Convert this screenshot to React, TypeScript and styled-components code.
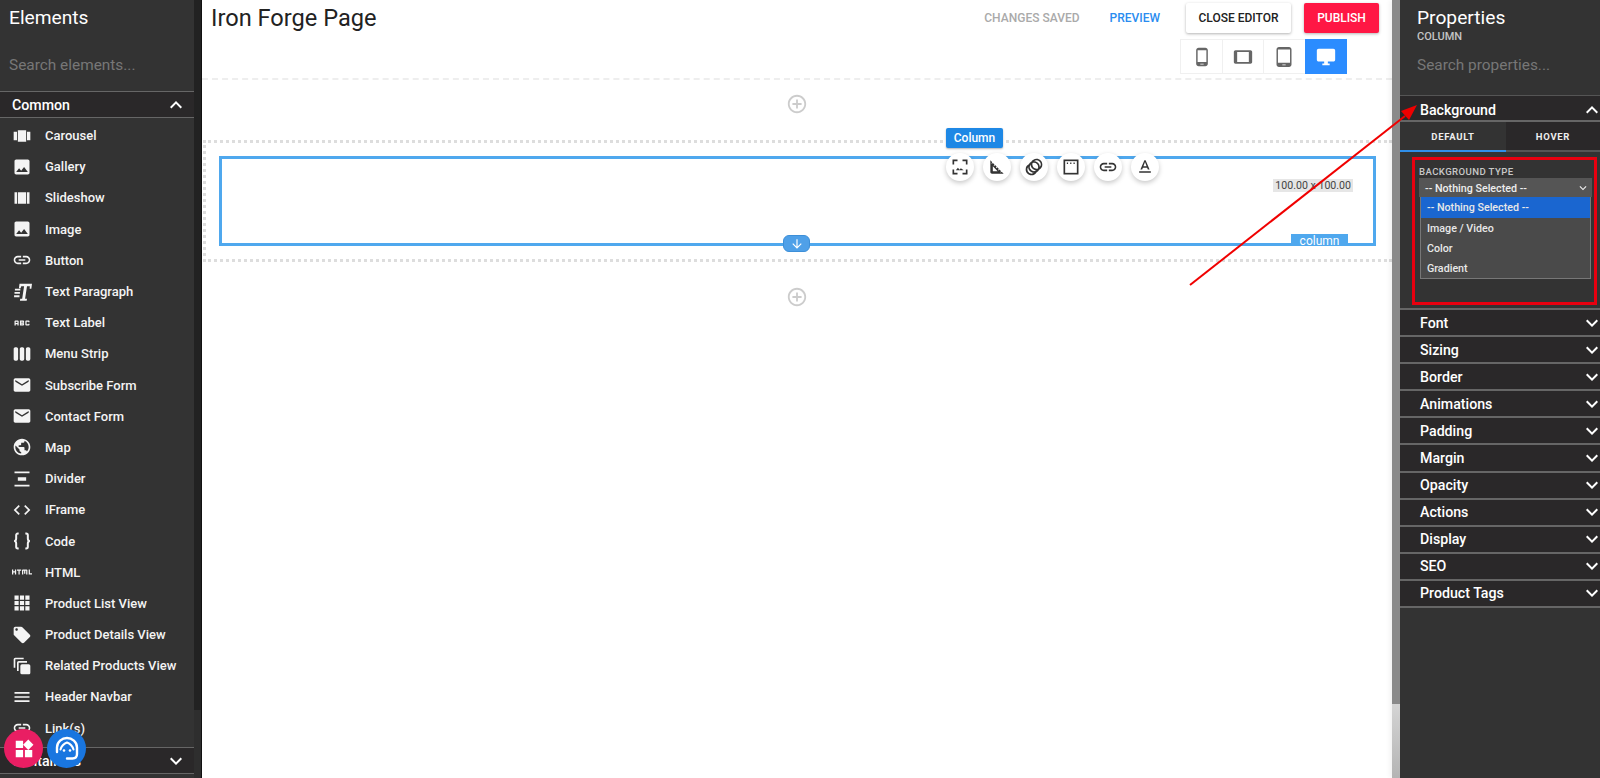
import { ReactElement } from "react";
import styled, { createGlobalStyle } from "styled-components";
import {
  MdAbc,
  MdAddCircleOutline,
  MdAnimation,
  MdArrowDownward,
  MdAutoAwesomeMotion,
  MdCode,
  MdDesktopWindows,
  MdEmail,
  MdExpandLess,
  MdExpandMore,
  MdHtml,
  MdImage,
  MdLink,
  MdLocalOffer,
  MdMenu,
  MdPhoneAndroid,
  MdPublic,
  MdSquareFoot,
  MdTablet,
  MdTabletAndroid,
  MdTextFormat,
  MdViewArray,
  MdViewCarousel,
  MdViewWeek,
  MdWidgets,
} from "react-icons/md";

const GlobalStyle = createGlobalStyle`
  html, body {
    margin: 0;
    height: 100%;
    overflow: hidden;
    background: #fff;
    font-family: Roboto, "Liberation Sans", sans-serif;
  }
  * {
    box-sizing: border-box;
  }
`;

const DividerIcon = () => (
  <svg width="20" height="20" viewBox="0 0 24 24" fill="currentColor">
    <path d="M3 3h18v2H3zM7 10h10v4H7zM3 19h18v2H3z" />
  </svg>
);

const ParagraphIcon = () => (
  <svg width="20" height="20" viewBox="0 0 24 24" fill="currentColor">
    <path d="M9 2h15l-.8 6h-2l.2-3h-3.400l-2.300 15h2.300l-.4 2.500H9.500l.4-2.500h2.300l2.300-15h-3.400l-.8 2.500H8.300zM3.500 8h6.500v2.200H3.500zM3 12h6.500v2.200H3zM2.500 16h6.500v2.200H2.500z" />
  </svg>
);

const BracesIcon = () => (
  <svg width="20" height="20" viewBox="0 0 24 24" fill="none" stroke="currentColor" strokeWidth="2.400">
    <path d="M8 3H7C5.500 3 5 4 5 5v4c0 1.500-.8 3-2.500 3C4.200 12 5 13.500 5 15v4c0 1 .5 2 2 2h1M16 3h1c1.500 0 2 1 2 2v4c0 1.500.8 3 2.500 3-1.700 0-2.500 1.500-2.500 3v4c0 1-.5 2-2 2h-1" />
  </svg>
);

const GridIcon = () => (
  <svg width="20" height="20" viewBox="0 0 24 24" fill="currentColor">
    <path d="M3 3h5v5H3zM9.500 3h5v5h-5zM16 3h5v5h-5zM3 9.500h5v5H3zM9.500 9.500h5v5h-5zM16 9.500h5v5h-5zM3 16h5v5H3zM9.500 16h5v5h-5zM16 16h5v5h-5z" />
  </svg>
);

const WindowIcon = () => (
  <svg width="20" height="20" viewBox="0 0 24 24" fill="none" stroke="currentColor" strokeWidth="2">
    <rect x="4" y="4" width="16" height="16" />
    <path d="M7 7.500h1.500M11 7.500h1.500M15 7.500h1.500" />
  </svg>
);

const FrameImageIcon = () => (
  <svg width="20" height="20" viewBox="0 0 24 24" fill="none" stroke="currentColor" strokeWidth="2">
    <path d="M9 4H4v5M15 4h5v5M4 15v5h5M20 15v5h-5" />
    <path d="M7 16l2.500-3 2 2.200 1.500-1.700 3.500 2.500z" fill="currentColor" stroke="none" />
  </svg>
);

const HeadsetIcon = () => (
  <svg width="30" height="30" viewBox="0 0 30 30" fill="none" stroke="currentColor" strokeWidth="2.400">
    <path d="M5 18v-4.500C5 8 10 4 15 4s10 4 10 9.500V20c0 3-2 4.500-4.500 4.500H15" strokeLinecap="round" />
    <path d="M8.500 15.500C9.500 12 12.500 9.500 15 8.500c2.500 1 5.500 3.500 6.500 7" strokeWidth="2" strokeLinecap="round" />
    <circle cx="12" cy="16.500" r="1.300" fill="currentColor" stroke="none" />
    <circle cx="18" cy="16.500" r="1.300" fill="currentColor" stroke="none" />
  </svg>
);

type Element = { label: string; icon: ReactElement };

const elements: Element[] = [
  { label: "Carousel", icon: <MdViewCarousel /> },
  { label: "Gallery", icon: <MdImage /> },
  { label: "Slideshow", icon: <MdViewArray /> },
  { label: "Image", icon: <MdImage /> },
  { label: "Button", icon: <MdLink /> },
  { label: "Text Paragraph", icon: <ParagraphIcon /> },
  { label: "Text Label", icon: <MdAbc /> },
  { label: "Menu Strip", icon: <MdViewWeek /> },
  { label: "Subscribe Form", icon: <MdEmail /> },
  { label: "Contact Form", icon: <MdEmail /> },
  { label: "Map", icon: <MdPublic /> },
  { label: "Divider", icon: <DividerIcon /> },
  { label: "IFrame", icon: <MdCode /> },
  { label: "Code", icon: <BracesIcon /> },
  { label: "HTML", icon: <MdHtml /> },
  { label: "Product List View", icon: <GridIcon /> },
  { label: "Product Details View", icon: <MdLocalOffer /> },
  { label: "Related Products View", icon: <MdAutoAwesomeMotion /> },
  { label: "Header Navbar", icon: <MdMenu /> },
  { label: "Link(s)", icon: <MdLink /> },
];

const properties = [
  "Font",
  "Sizing",
  "Border",
  "Animations",
  "Padding",
  "Margin",
  "Opacity",
  "Actions",
  "Display",
  "SEO",
  "Product Tags",
];

const Page = styled.div`
  position: relative;
  display: flex;
  width: 100%;
  height: 100vh;
  overflow: hidden;
`;

const Sidebar = styled.aside`
  display: flex;
  flex: none;
  width: 202px;
  height: 100%;
  background: #333;
  color: #fff;
  border-right: 1px solid #111;
`;

const SidebarBody = styled.div`
  width: 194px;
  height: 100%;
  overflow: hidden;
`;

const SidebarRail = styled.div`
  flex: 1;
  background: linear-gradient(to bottom, #222 0, #222 710px, #2e2e2e 710px);
`;

const PanelTitle = styled.h2`
  margin: 0;
  font-size: 19.200px;
  font-weight: 400;
  line-height: 24px;
`;

const SidebarHead = styled.div`
  height: 91px;
  padding: 6px 9px 0;
`;

const Placeholder = styled.div`
  margin-top: 24px;
  font-size: 15.400px;
  line-height: 22px;
  color: #777;
`;

const GroupRow = styled.div`
  display: flex;
  align-items: center;
  justify-content: space-between;
  height: 27px;
  padding: 1px 6px 0 12px;
  background: #2a2829;
  border-top: 1px solid #666;
  border-bottom: 1px solid #666;
  font-size: 14.200px;
  font-weight: 500;
  svg {
    font-size: 24px;
  }
`;

const ElementList = styled.ul`
  margin: 0;
  padding: 2px 0 3px;
  list-style: none;
`;

const ElementItem = styled.li`
  display: flex;
  align-items: center;
  gap: 13px;
  height: 31.200px;
  padding-left: 12px;
  font-size: 13px;
  font-weight: 500;
  color: #f4f4f4;
  svg {
    flex: none;
    font-size: 20px;
  }
`;

const Main = styled.main`
  flex: 1;
  min-width: 0;
  height: 100%;
`;

const TopBar = styled.header`
  display: flex;
  justify-content: space-between;
  height: 80px;
  padding: 3px 13px 0 9px;
  border-bottom: 2px dashed #eee;
`;

const PageTitle = styled.h1`
  margin: 0;
  font-size: 23.600px;
  font-weight: 400;
  line-height: 30px;
  color: #222;
`;

const TopActions = styled.div`
  display: flex;
  flex-direction: column;
  align-items: flex-end;
  gap: 6px;
`;

const ActionRow = styled.div`
  display: flex;
  align-items: center;
`;

const StatusText = styled.span<{ $color: string; $gap: number }>`
  margin-right: ${(p) => p.$gap}px;
  font-size: 12px;
  font-weight: 500;
  color: ${(p) => p.$color};
`;

const HeadButton = styled.button<{ $primary?: boolean }>`
  height: 30px;
  padding: 0;
  width: ${(p) => (p.$primary ? 75 : 105)}px;
  margin-right: ${(p) => (p.$primary ? 0 : 13)}px;
  border: 0;
  border-radius: 2px;
  background: ${(p) => (p.$primary ? "#ff1744" : "#fff")};
  color: ${(p) => (p.$primary ? "#fff" : "#222")};
  font: 500 12px Roboto, sans-serif;
  box-shadow: 0 1px 3px rgba(0, 0, 0, 0.3);
`;

const DeviceGroup = styled.div`
  display: flex;
  margin-right: 32px;
`;

const DeviceButton = styled.div<{ $active?: boolean }>`
  display: flex;
  align-items: center;
  justify-content: center;
  width: 42.400px;
  height: 35px;
  border: 1px solid ${(p) => (p.$active ? "#2b8cff" : "#f0f0f0")};
  margin-left: -1px;
  background: ${(p) => (p.$active ? "#2b8cff" : "#fff")};
  color: ${(p) => (p.$active ? "#fff" : "#666")};
  font-size: ${(p) => (p.$active ? 22 : 20)}px;
`;

const AddRow = styled.div<{ $top: number; $height: number }>`
  display: flex;
  align-items: flex-start;
  justify-content: center;
  height: ${(p) => p.$height}px;
  padding-top: ${(p) => p.$top}px;
  color: #ccc;
  font-size: 22px;
`;

const Section = styled.section`
  height: 122px;
  padding: 13px 16px 13px 13px;
  border-top: 3px dotted #ddd;
  border-bottom: 3px dotted #ddd;
  border-left: 3px dotted #ddd;
  margin-left: 1px;
`;

const ColumnBox = styled.div`
  position: relative;
  height: 90px;
  border: 3px solid #4fa8ee;
`;

const ColumnLabel = styled.div`
  position: absolute;
  top: -31px;
  left: 724px;
  width: 57px;
  height: 20px;
  border-radius: 2px;
  background: #1e88e5;
  color: #fff;
  font-size: 12px;
  font-weight: 500;
  line-height: 20px;
  text-align: center;
  box-shadow: 0 1px 2px rgba(0, 0, 0, 0.3);
`;

const ToolRow = styled.div`
  position: absolute;
  top: -6px;
  left: 724px;
  display: flex;
  gap: 9px;
`;

const ToolButton = styled.div`
  display: flex;
  align-items: center;
  justify-content: center;
  width: 28px;
  height: 28px;
  border-radius: 50%;
  background: #fff;
  color: #333;
  font-size: 20px;
  box-shadow: 0 2px 5px rgba(0, 0, 0, 0.22);
`;

const SizeBadge = styled.div`
  position: absolute;
  top: 20px;
  right: 20px;
  padding: 0 2px;
  background: #e6e6e6;
  color: #444;
  font-size: 10.600px;
  line-height: 13px;
  white-space: nowrap;
`;

const ColumnTag = styled.div`
  position: absolute;
  right: 25px;
  bottom: -3px;
  width: 57px;
  height: 12px;
  background: #4fa8ee;
  color: #fff;
  font-size: 12px;
  line-height: 14px;
  text-align: center;
`;

const DownHandle = styled.div`
  position: absolute;
  left: 561px;
  bottom: -9px;
  display: flex;
  align-items: center;
  justify-content: center;
  width: 27px;
  height: 17px;
  border: 1px solid #3d8fd8;
  border-radius: 6px;
  background: #4fa0e8;
  color: #fff;
  font-size: 14px;
`;

const PageRail = styled.div`
  flex: none;
  width: 8px;
  height: 100%;
  background: linear-gradient(to bottom, #8a8a8a 0, #8a8a8a 704px, #d4d4d4 704px, #b4b4b4 778px);
  box-shadow: -2px 0 5px rgba(0, 0, 0, 0.06);
`;

const Properties = styled.aside`
  flex: none;
  width: 200px;
  height: 100%;
  overflow: hidden;
  background: #333;
  color: #fff;
`;

const PropertiesHead = styled.div`
  height: 95px;
  padding: 6px 17px 0;
`;

const Subtitle = styled.div`
  margin-top: 1px;
  font-size: 11px;
  font-weight: 500;
  line-height: 12px;
  color: #c4c4c4;
`;

const PropertiesSearch = styled(Placeholder)`
  margin-top: 11px;
`;

const PropRow = styled.div`
  display: flex;
  align-items: center;
  justify-content: space-between;
  height: 27.100px;
  padding: 0 0 0 20px;
  background: #2a2829;
  border-bottom: 2px solid #666;
  font-size: 14.200px;
  font-weight: 500;
  svg {
    flex: none;
    font-size: 24px;
    margin-right: -4px;
  }
`;

const FirstRow = styled(PropRow)`
  height: 27px;
  padding-top: 4px;
  border-top: 1px solid #555;
`;

const Tabs = styled.div`
  display: grid;
  grid-template-columns: 106px 94px;
  height: 29px;
  background: #2a2829;
`;

const Tab = styled.div<{ $active?: boolean }>`
  padding-top: 2px;
  border-bottom: 2px solid ${(p) => (p.$active ? "#2f8fea" : "#555")};
  background: ${(p) => (p.$active ? "#333" : "#2a2829")};
  font-size: 9.500px;
  font-weight: 700;
  letter-spacing: 0.700px;
  line-height: 26px;
  text-align: center;
  color: #eee;
`;

const BoxWrap = styled.div`
  padding: 6px 3px 3px 12px;
  border-bottom: 2px solid #666;
`;

const RedBox = styled.div`
  height: 148px;
  padding: 6px 2px 0 4px;
  border: 3px solid #e8000f;
`;

const FieldLabel = styled.div`
  font-size: 9.600px;
  font-weight: 500;
  letter-spacing: 0.400px;
  line-height: 12px;
  color: #c8c8c8;
`;

const SelectBox = styled.div`
  display: flex;
  align-items: center;
  justify-content: space-between;
  height: 19px;
  padding: 1px 2px 0 6px;
  background: #555;
  font-size: 10.700px;
  font-weight: 500;
  color: #eee;
  svg {
    font-size: 14px;
  }
`;

const OptionList = styled.div`
  margin: 0 1px;
  height: 82px;
  background: #4a4a4a;
  border: 1px solid #777;
  border-top: 0;
`;

const Option = styled.div<{ $selected?: boolean }>`
  height: ${(p) => (p.$selected ? 21 : 20)}px;
  padding-left: 6px;
  background: ${(p) => (p.$selected ? "#1a66d0" : "transparent")};
  font-size: 10.700px;
  font-weight: 500;
  line-height: 22px;
  color: #e8e8e8;
`;

const Floating = styled.div`
  position: absolute;
  left: 4px;
  top: 729px;
  display: flex;
  gap: 4px;
`;

const RoundBadge = styled.div<{ $color: string }>`
  display: flex;
  align-items: center;
  justify-content: center;
  width: 39px;
  height: 39px;
  border-radius: 50%;
  background: ${(p) => p.$color};
  color: #fff;
  font-size: 22px;
`;

const ArrowOverlay = styled.svg`
  position: absolute;
  top: 0;
  left: 0;
  width: 100%;
  height: 100%;
  pointer-events: none;
`;

const tools = [
  <FrameImageIcon key="size" />,
  <MdSquareFoot key="foot" />,
  <MdAnimation key="anim" />,
  <WindowIcon key="window" />,
  <MdLink key="link" />,
  <MdTextFormat key="text" />,
];

export default function App() {
  return (
    <Page>
      <GlobalStyle />
      <Sidebar>
        <SidebarBody>
          <SidebarHead>
            <PanelTitle>Elements</PanelTitle>
            <Placeholder>Search elements...</Placeholder>
          </SidebarHead>
          <GroupRow>
            Common
            <MdExpandLess />
          </GroupRow>
          <ElementList>
            {elements.map((el) => (
              <ElementItem key={el.label}>
                {el.icon}
                {el.label}
              </ElementItem>
            ))}
          </ElementList>
          <GroupRow>
            Containers
            <MdExpandMore />
          </GroupRow>
        </SidebarBody>
        <SidebarRail />
      </Sidebar>

      <Main>
        <TopBar>
          <PageTitle>Iron Forge Page</PageTitle>
          <TopActions>
            <ActionRow>
              <StatusText $color="#aaa" $gap={30}>CHANGES SAVED</StatusText>
              <StatusText $color="#2a8cf0" $gap={26}>PREVIEW</StatusText>
              <HeadButton>CLOSE EDITOR</HeadButton>
              <HeadButton $primary>PUBLISH</HeadButton>
            </ActionRow>
            <DeviceGroup>
              <DeviceButton><MdPhoneAndroid /></DeviceButton>
              <DeviceButton><MdTablet /></DeviceButton>
              <DeviceButton><MdTabletAndroid /></DeviceButton>
              <DeviceButton $active><MdDesktopWindows /></DeviceButton>
            </DeviceGroup>
          </TopActions>
        </TopBar>
        <AddRow $top={13} $height={60}>
          <MdAddCircleOutline />
        </AddRow>
        <Section>
          <ColumnBox>
            <ColumnLabel>Column</ColumnLabel>
            <ToolRow>
              {tools.map((tool) => (
                <ToolButton key={tool.key}>{tool}</ToolButton>
              ))}
            </ToolRow>
            <SizeBadge>100.00 x 100.00</SizeBadge>
            <ColumnTag>column</ColumnTag>
            <DownHandle>
              <MdArrowDownward />
            </DownHandle>
          </ColumnBox>
        </Section>
        <AddRow $top={24} $height={70}>
          <MdAddCircleOutline />
        </AddRow>
      </Main>

      <PageRail />

      <Properties>
        <PropertiesHead>
          <PanelTitle>Properties</PanelTitle>
          <Subtitle>COLUMN</Subtitle>
          <PropertiesSearch>Search properties...</PropertiesSearch>
        </PropertiesHead>
        <FirstRow>
          Background
          <MdExpandLess />
        </FirstRow>
        <Tabs>
          <Tab $active>DEFAULT</Tab>
          <Tab>HOVER</Tab>
        </Tabs>
        <BoxWrap>
          <RedBox>
            <FieldLabel>BACKGROUND TYPE</FieldLabel>
            <SelectBox>
              -- Nothing Selected --
              <MdExpandMore />
            </SelectBox>
            <OptionList>
              <Option $selected>-- Nothing Selected --</Option>
              <Option>Image / Video</Option>
              <Option>Color</Option>
              <Option>Gradient</Option>
            </OptionList>
          </RedBox>
        </BoxWrap>
        {properties.map((name) => (
          <PropRow key={name}>
            {name}
            <MdExpandMore />
          </PropRow>
        ))}
      </Properties>

      <Floating>
        <RoundBadge $color="#e91e63"><MdWidgets /></RoundBadge>
        <RoundBadge $color="#1976e0"><HeadsetIcon /></RoundBadge>
      </Floating>

      <ArrowOverlay viewBox="0 0 1600 778">
        <line x1="1190" y1="285" x2="1405" y2="116" stroke="#f00000" strokeWidth="2" />
        <polygon points="1417,105 1401,111 1409,120" fill="#f00000" />
      </ArrowOverlay>
    </Page>
  );
}
